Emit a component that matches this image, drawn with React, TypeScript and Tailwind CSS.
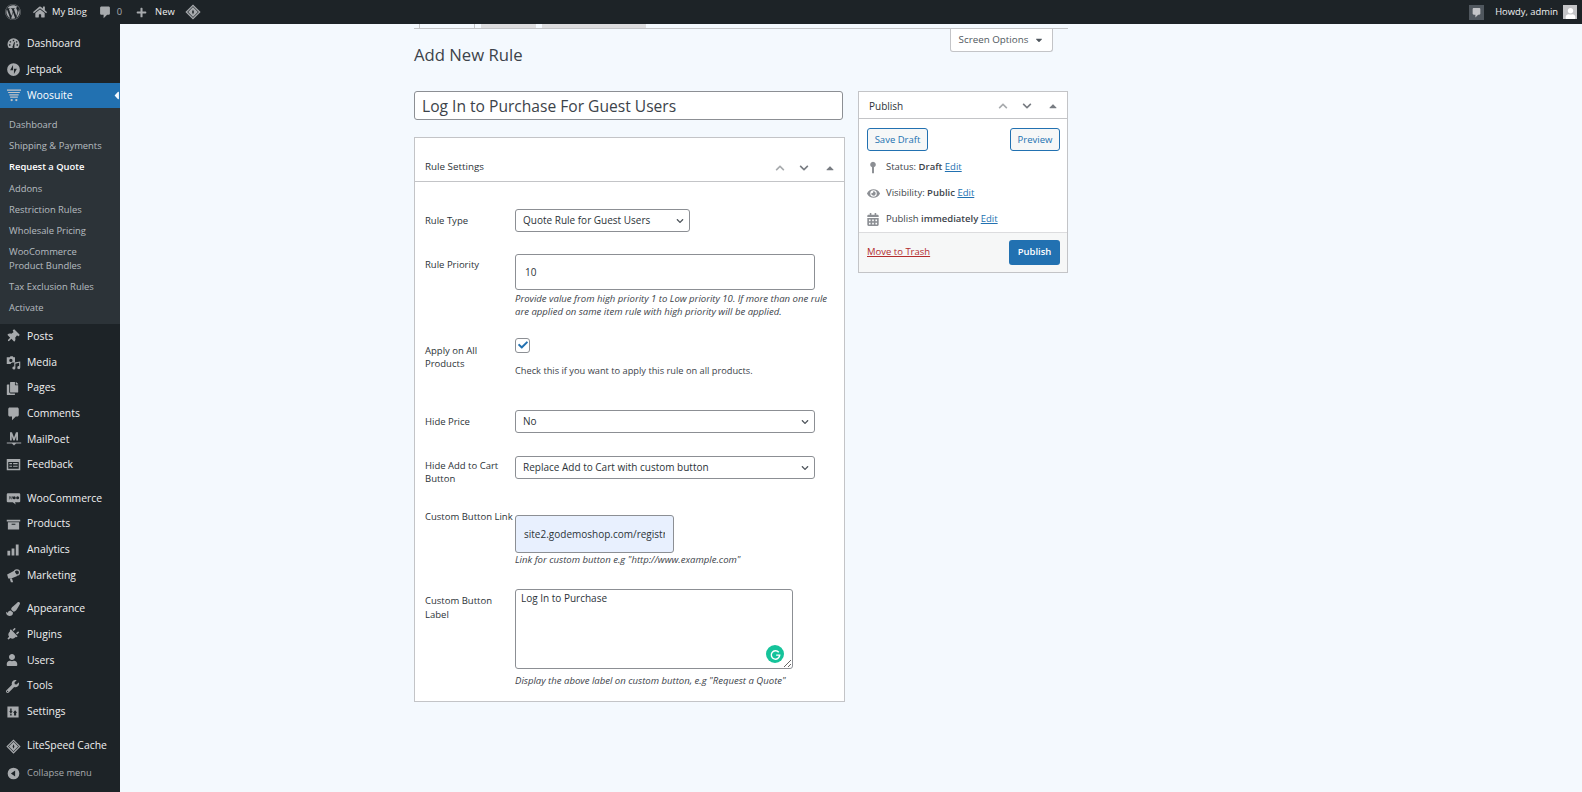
import type { ReactNode } from "react";
import {
  FaWordpress, FaHome, FaPlus, FaThumbtack, FaCopy, FaPaintBrush, FaPlug, FaUser, FaWrench,
  FaEye, FaCalendarAlt, FaChevronUp, FaChevronDown, FaCaretUp, FaCaretDown, FaCheck, FaCaretLeft,
} from "react-icons/fa";

const Diamond = ({ className = "" }: { className?: string }) => (
  <svg viewBox="0 0 20 20" className={className} fill="currentColor">
    <path d="M10 .5 19.500 10 10 19.500 .5 10Z M10 2.800 2.800 10 10 17.200 17.200 10Z" fillRule="evenodd" />
    <path d="M10 3.800 16.200 10 10 16.200 3.800 10Z M10 7 8.800 10 10 13 11.200 10Z" fillRule="evenodd" />
  </svg>
);

const Bubble = ({ className = "" }: { className?: string }) => (
  <svg viewBox="0 0 20 20" className={className} fill="currentColor">
    <path d="M5 2h10c1.100 0 2 .9 2 2v8c0 1.100-.9 2-2 2h-2l-5 5v-5H5c-1.100 0-2-.9-2-2V4c0-1.100.9-2 2-2Z" />
  </svg>
);

const Gauge = () => (
  <svg viewBox="0 0 20 20" className="w-[15px] h-[15px]" fill="currentColor">
    <path fillRule="evenodd" d="M10 3a8 8 0 0 0-8 8c0 2 .7 3.800 1.900 5h12.200A8 8 0 0 0 18 11a8 8 0 0 0-8-8ZM9 5h2v2H9Zm-4 2h1.800v1.800H5Zm8.200 0H15v1.800h-1.800ZM4 11h2v2H4Zm10 0h2v2h-2Zm-3.200-3L12 8.500l-1 5a1.500 1.500 0 1 1-2 0Z" />
  </svg>
);

const Jetpack = () => (
  <svg viewBox="0 0 20 20" className="w-[15px] h-[15px]" fill="currentColor">
    <path fillRule="evenodd" d="M10 1.500a8.500 8.500 0 1 0 0 17 8.500 8.500 0 0 0 0-17ZM9.400 4v7H5.500Zm1.200 12V9h3.900Z" />
  </svg>
);

const Cart = () => (
  <svg viewBox="0 0 20 18" className="w-[16px] h-[14px]" fill="currentColor">
    <path d="M1 2h18v1.500H1Zm1.500 3h15v1.500h-15Zm1.500 3h12v1.500H4Zm1 3h10v1.500H5Z" />
    <circle cx="7" cy="15.500" r="1.500" />
    <circle cx="13" cy="15.500" r="1.500" />
  </svg>
);

const Media = () => (
  <svg viewBox="0 0 20 20" className="w-[15px] h-[15px]" fill="currentColor">
    <path fillRule="evenodd" d="M1 3h4l1-1.500h3L10 3h2v7H8.500a3 3 0 0 0-2.500 2H1Zm5.500 2a2.200 2.200 0 1 0 0 4.400 2.200 2.200 0 0 0 0-4.400Z" />
    <path d="M19 8.500v8.300a2 2 0 1 1-1.500-1.900v-4.600l-5 1.200v5.800a2 2 0 1 1-1.500-1.900V10Z" />
  </svg>
);

const Mailpoet = () => (
  <svg viewBox="0 0 20 20" className="w-[16px] h-[16px]" fill="currentColor">
    <path d="M5 1.500h2.500L10 8l2.500-6.500H15V12h-2.200V6.500L10.800 12H9.200l-2-5.500V12H5Z" />
    <path d="M1 14.500h18v1.200h-6.500L10 18l-2.500-2.300H1Z" />
  </svg>
);

const Feedback = () => (
  <svg viewBox="0 0 20 20" className="w-[15px] h-[15px]" fill="currentColor">
    <path fillRule="evenodd" d="M1 2.500h18v15H1ZM3 6.500v9h14v-9ZM4.500 8H8v1.500H4.500Zm5 0h6v1.500h-6Zm-5 3.500H8V13H4.500Zm5 0h6V13h-6Z" />
  </svg>
);

const Woo = () => (
  <svg viewBox="0 0 20 20" className="w-[15px] h-[15px]" fill="currentColor">
    <path fillRule="evenodd" d="M2.500 3h15A1.500 1.500 0 0 1 19 4.500v9a1.500 1.500 0 0 1-1.500 1.500H12l1 3-4-3H2.500A1.500 1.500 0 0 1 1 13.500v-9A1.500 1.500 0 0 1 2.500 3ZM4 7l1 4.500L6.800 8l1 3.500L9.500 7H8.700l-.9 2.500L6.900 7H6.300L5.300 9.500 4.800 7Zm7 0a2 2 0 1 0 0 4 2 2 0 0 0 0-4Zm4.500 0a2 2 0 1 0 0 4 2 2 0 0 0 0-4Z" />
  </svg>
);

const Archive = () => (
  <svg viewBox="0 0 20 20" className="w-[15px] h-[15px]" fill="currentColor">
    <path fillRule="evenodd" d="M1 3.500h18V6H1Zm1.500 3.500h15v9.500h-15ZM7.500 9v1.300h5V9Z" />
  </svg>
);

const Bars = () => (
  <svg viewBox="0 0 20 20" className="w-[14px] h-[14px]" fill="currentColor">
    <path d="M2 11h4v7H2Zm6-3h4v10H8Zm6-6h4v16h-4Z" />
  </svg>
);

const Megaphone = () => (
  <svg viewBox="0 0 20 20" className="w-[15px] h-[15px]" fill="currentColor">
    <path d="M1.500 8.500 11 3.500l4 7-8 3.500H3Z" />
    <path d="M5 14h3l1.500 5H6.500Z" />
    <circle cx="14.500" cy="6" r="3.500" fill="none" stroke="currentColor" strokeWidth="1.500" />
  </svg>
);

const SettingsIcon = () => (
  <svg viewBox="0 0 20 20" className="w-[14px] h-[14px]" fill="currentColor">
    <path fillRule="evenodd" d="M2 2h16v16H2ZM6 5v4H4.500L7 12l2.500-3H8V5Zm5.500 6H10l3-3.500L16 11h-1.500v4h-3ZM6 12.500h2V15H6Z" />
  </svg>
);

const Collapse = () => (
  <svg viewBox="0 0 20 20" className="w-[13px] h-[13px]" fill="currentColor">
    <path fillRule="evenodd" d="M10 1a9 9 0 1 0 0 18 9 9 0 0 0 0-18Zm2.500 4.500v9L6 10Z" />
  </svg>
);

const Pin = () => (
  <svg viewBox="0 0 12 20" className="w-[8px] h-[13px] ml-[2px]" fill="currentColor">
    <path d="M6 1a4.500 4.500 0 0 1 1.500 8.700V19h-3V9.700A4.500 4.500 0 0 1 6 1Z" />
  </svg>
);

const Menu = ({ icon, label }: { icon: ReactNode; label: string }) => (
  <div className="h-[25.65px] flex items-center text-[#f0f0f1]">
    <span className="w-[27px] pl-[6px] flex justify-start text-[#a7aaad] text-[14px]">{icon}</span>
    <span>{label}</span>
  </div>
);

const Sub = ({ children, bold }: { children: ReactNode; bold?: boolean }) => (
  <div className={`px-[9px] py-[3.6px] leading-[14px] ${bold ? "text-white font-semibold" : "text-[#f0f6fcb3]"}`}>
    {children}
  </div>
);

const Field = ({ label, className, children }: { label: ReactNode; className: string; children: ReactNode }) => (
  <div className={`grid grid-cols-[90px_1fr] ${className}`}>
    <div className="text-[9.500px] leading-[13.500px] text-[#2c3338] font-medium">{label}</div>
    <div>{children}</div>
  </div>
);

const Select = ({ value, className }: { value: string; className: string }) => (
  <div className={`relative h-[23px] ${className}`}>
    <select
      defaultValue={value}
      className="w-full h-full appearance-none bg-white border border-[#8c8f94] rounded-[3px] pl-[7px] text-[10px] text-[#2c3338] outline-none"
    >
      <option>{value}</option>
    </select>
    <FaChevronDown className="absolute right-[6px] top-[8px] text-[#50575e] w-[8px] h-[8px]" />
  </div>
);

const Help = ({ children }: { children: ReactNode }) => (
  <p className="text-[9.550px] leading-[13px] italic text-[#3c434a] whitespace-nowrap">{children}</p>
);

const Handles = () => (
  <div className="flex items-center text-[#787c82]">
    <FaChevronUp className="w-[10px] h-[10px] text-[#a7aaad]" />
    <FaChevronDown className="w-[10px] h-[10px] ml-[14px]" />
    <FaCaretUp className="w-[12px] h-[12px] ml-[15px]" />
  </div>
);

const Edit = () => <a className="text-[#2271b1] underline">Edit</a>;

export default function App() {
  return (
    <div className="h-screen overflow-hidden bg-[#f4f9fe] font-['Open_Sans','Noto_Sans',sans-serif] text-[10.400px]">
      {/* Admin bar */}
      <div className="h-[24px] bg-[#1d2327] flex items-center text-[#f0f0f1] text-[9.400px] font-medium">
        <FaWordpress className="w-[16px] h-[16px] ml-[5px] text-[#a7aaad]" />
        <FaHome className="w-[14px] h-[14px] ml-[12px] text-[#a7aaad]" />
        <span className="ml-[5px]">My Blog</span>
        <Bubble className="w-[14px] h-[14px] ml-[11px] text-[#a7aaad]" />
        <span className="ml-[5px] text-[#a7aaad]">0</span>
        <FaPlus className="w-[11px] h-[11px] ml-[14px] text-[#a7aaad]" />
        <span className="ml-[8px]">New</span>
        <Diamond className="w-[16px] h-[16px] ml-[10px] text-[#a7aaad]" />
        <div className="ml-auto w-[15px] h-[15px] bg-[#50575e] flex items-center justify-center">
          <Bubble className="w-[11px] h-[11px] text-[#c3c4c7]" />
        </div>
        <span className="ml-[11px]">Howdy, admin</span>
        <div className="ml-[5px] mr-[5px] w-[14px] h-[14px] bg-[#c3c4c7] flex items-end justify-center overflow-hidden">
          <FaUser className="w-[11px] h-[11px] text-white" />
        </div>
      </div>

      <div className="flex h-[768px]">
        {/* Sidebar */}
        <div className="w-[120px] shrink-0 bg-[#1d2327] pt-[7px]">
          <Menu icon={<Gauge />} label="Dashboard" />
          <Menu icon={<Jetpack />} label="Jetpack" />
          <div className="relative mt-[0.7px] h-[25px] bg-[#2271b1] flex items-center text-white">
            <span className="w-[27px] pl-[6px] text-[#c3c4c7]"><Cart /></span>
            <span className="font-medium">Woosuite</span>
            <FaCaretLeft className="absolute -right-[3px] top-[6px] w-[13px] h-[13px] text-[#f4f9fe]" />
          </div>
          <div className="bg-[#2c3338] pt-[6.400px] pb-[4.900px] text-[9.400px]">
            <Sub>Dashboard</Sub>
            <Sub>Shipping &amp; Payments</Sub>
            <Sub bold>Request a Quote</Sub>
            <Sub>Addons</Sub>
            <Sub>Restriction Rules</Sub>
            <Sub>Wholesale Pricing</Sub>
            <Sub>WooCommerce<br />Product Bundles</Sub>
            <Sub>Tax Exclusion Rules</Sub>
            <Sub>Activate</Sub>
          </div>
          <Menu icon={<FaThumbtack className="w-[13px] h-[13px] rotate-45" />} label="Posts" />
          <Menu icon={<Media />} label="Media" />
          <Menu icon={<FaCopy className="w-[13px] h-[13px]" />} label="Pages" />
          <Menu icon={<Bubble className="w-[15px] h-[15px]" />} label="Comments" />
          <Menu icon={<Mailpoet />} label="MailPoet" />
          <Menu icon={<Feedback />} label="Feedback" />
          <div className="h-[8px]" />
          <Menu icon={<Woo />} label="WooCommerce" />
          <Menu icon={<Archive />} label="Products" />
          <Menu icon={<Bars />} label="Analytics" />
          <Menu icon={<Megaphone />} label="Marketing" />
          <div className="h-[8px]" />
          <Menu icon={<FaPaintBrush className="w-[14px] h-[14px]" />} label="Appearance" />
          <Menu icon={<FaPlug className="w-[13px] h-[13px] rotate-45" />} label="Plugins" />
          <Menu icon={<FaUser className="w-[12px] h-[12px]" />} label="Users" />
          <Menu icon={<FaWrench className="w-[13px] h-[13px]" />} label="Tools" />
          <Menu icon={<SettingsIcon />} label="Settings" />
          <div className="h-[8.700px]" />
          <Menu icon={<Diamond className="w-[15px] h-[15px]" />} label="LiteSpeed Cache" />
          <div className="mt-[2px] flex items-center text-[#a7aaad] text-[9.400px] h-[25px]">
            <span className="w-[27px] pl-[7px]"><Collapse /></span>
            <span>Collapse menu</span>
          </div>
        </div>

        {/* Main */}
        <div className="pl-[294px] w-[1000px]">
          <div className="w-[654px]">
            <div className="flex items-end h-[4px] border-b border-[#c3c4c7] box-content pl-[5px] gap-[6px]">
              <div className="w-[56px] h-[4px] bg-[#f4f9fe] border-x border-[#c3c4c7]" />
              <div className="w-[55px] h-[4px] bg-[#dcdcde]" />
              <div className="w-[104px] h-[4px] bg-[#dcdcde]" />
            </div>
            <div className="flex justify-between items-start">
              <h1 className="mt-[14px] text-[16.700px] leading-[24px] text-[#3c434a]">Add New Rule</h1>
              <div className="mr-[15px] w-[103px] h-[23px] bg-white border border-t-0 border-[#c3c4c7] rounded-b-[3px] flex items-center justify-center gap-[6px] text-[9.800px] text-[#50575e]">
                Screen Options <FaCaretDown className="w-[10px] h-[10px]" />
              </div>
            </div>
            <div className="flex mt-[24px] items-start">
              {/* Left column */}
              <div className="w-[431px]">
                <input
                  defaultValue="Log In to Purchase For Guest Users"
                  className="w-[429px] h-[29px] px-[7px] bg-white border border-[#8c8f94] rounded-[3px] text-[15.600px] text-[#3c434a] outline-none"
                />
                <div className="mt-[16.500px] bg-white border border-[#c3c4c7] h-[565px]">
                  <div className="h-[44px] border-b border-[#c3c4c7] flex items-end justify-between pb-[7px] pl-[10px] pr-[8px]">
                    <span className="text-[9.800px] leading-[14px] font-medium text-[#2c3338]">Rule Settings</span>
                    <Handles />
                  </div>
                  <div className="pl-[10px]">
                    <Field label={<span className="block mt-[5px]">Rule Type</span>} className="mt-[27px]">
                      <Select value="Quote Rule for Guest Users" className="w-[175px]" />
                    </Field>
                    <Field label={<span className="block mt-[4px]">Rule Priority</span>} className="mt-[22px]">
                      <input
                        defaultValue="10"
                        className="block w-[300px] h-[36px] px-[9px] bg-white border border-[#8c8f94] rounded-[3px] text-[10px] text-[#2c3338] outline-none"
                      />
                      <div className="mt-[2px]">
                        <Help>Provide value from high priority 1 to Low priority 10. If more than one rule</Help>
                        <Help>are applied on same item rule with high priority will be applied.</Help>
                      </div>
                    </Field>
                    <Field label={<span className="block mt-[6px]">Apply on All<br />Products</span>} className="mt-[20px]">
                      <div className="w-[15px] h-[15px] bg-white border border-[#8c8f94] rounded-[3px] flex items-center justify-center">
                        <FaCheck className="w-[10px] h-[10px] text-[#2271b1]" />
                      </div>
                      <p className="mt-[11px] text-[9.250px] leading-[13px] text-[#3c434a]">Check this if you want to apply this rule on all products.</p>
                    </Field>
                    <Field label={<span className="block mt-[5px]">Hide Price</span>} className="mt-[33px]">
                      <Select value="No" className="w-[300px]" />
                    </Field>
                    <Field label={<span className="block mt-[3px]">Hide Add to Cart<br />Button</span>} className="mt-[23px]">
                      <Select value="Replace Add to Cart with custom button" className="w-[300px]" />
                    </Field>
                    <Field label={<span className="block -mt-[5px] whitespace-nowrap">Custom Button Link</span>} className="mt-[29.500px]">
                      <input
                        defaultValue="site2.godemoshop.com/registr"
                        className="block w-[159px] h-[38px] px-[8px] bg-[#e8f0fe] border border-[#8c8f94] rounded-[3px] text-[10px] text-[#2c3338] outline-none"
                      />
                      <div className="mt-[0px]"><Help>Link for custom button e.g "http://www.example.com"</Help></div>
                    </Field>
                    <Field label={<span className="block mt-[5px]">Custom Button<br />Label</span>} className="mt-[23px]">
                      <div className="relative w-[278px] h-[80px]">
                        <textarea
                          defaultValue="Log In to Purchase"
                          className="block w-full h-full px-[5px] py-[1px] bg-white border border-[#8c8f94] rounded-[3px] text-[10px] leading-[15px] text-[#2c3338] outline-none"
                        />
                        <div className="absolute right-[9px] bottom-[6px] w-[18px] h-[18px] rounded-full bg-[#15c39a] flex items-center justify-center">
                          <svg viewBox="0 0 20 20" className="w-[13px] h-[13px]" fill="none" stroke="white" strokeWidth="2.200">
                            <path d="M15 6.500A6.500 6.500 0 1 0 16.500 11H11" />
                          </svg>
                        </div>
                      </div>
                      <div className="mt-[5px]"><Help>Display the above label on custom button, e.g "Request a Quote"</Help></div>
                    </Field>
                  </div>
                </div>
              </div>

              {/* Publish box */}
              <div className="ml-[13px] w-[210px] h-[182px] bg-white border border-[#c3c4c7] flex flex-col text-[9.500px] text-[#3c434a]">
                <div className="h-[28px] border-b border-[#c3c4c7] flex items-center justify-between pl-[10px] pr-[8px] pt-[2px]">
                  <span className="text-[10px] text-[#2c3338]">Publish</span>
                  <Handles />
                </div>
                <div className="flex justify-between pl-[8px] pr-[7px] pt-[9px]">
                  <div className="w-[61px] h-[23px] flex items-center justify-center border border-[#2271b1] rounded-[3px] bg-[#f6f7f7] text-[#2271b1]">Save Draft</div>
                  <div className="w-[50px] h-[23px] flex items-center justify-center border border-[#2271b1] rounded-[3px] bg-[#f6f7f7] text-[#2271b1]">Preview</div>
                </div>
                <div className="pl-[8px] mt-[3px] flex flex-col">
                  <div className="h-[26px] flex items-center">
                    <span className="w-[19px] text-[#8c8f94]"><Pin /></span>
                    <span>Status: <span className="font-semibold">Draft</span> <Edit /></span>
                  </div>
                  <div className="h-[26px] flex items-center">
                    <span className="w-[19px] text-[#8c8f94]"><FaEye className="w-[13px] h-[13px]" /></span>
                    <span>Visibility: <span className="font-semibold">Public</span> <Edit /></span>
                  </div>
                  <div className="h-[26px] flex items-center">
                    <span className="w-[19px] text-[#8c8f94]"><FaCalendarAlt className="w-[12px] h-[13px]" /></span>
                    <span>Publish <span className="font-semibold">immediately</span> <Edit /></span>
                  </div>
                </div>
                <div className="mt-auto h-[41px] bg-[#f6f7f7] border-t border-[#dcdcde] flex items-center justify-between pl-[8px] pr-[7px]">
                  <a className="text-[#b32d2e] underline">Move to Trash</a>
                  <div className="w-[51px] h-[25px] rounded-[3px] bg-[#2271b1] text-white font-semibold flex items-center justify-center">Publish</div>
                </div>
              </div>
            </div>
          </div>
        </div>
      </div>
    </div>
  );
}
